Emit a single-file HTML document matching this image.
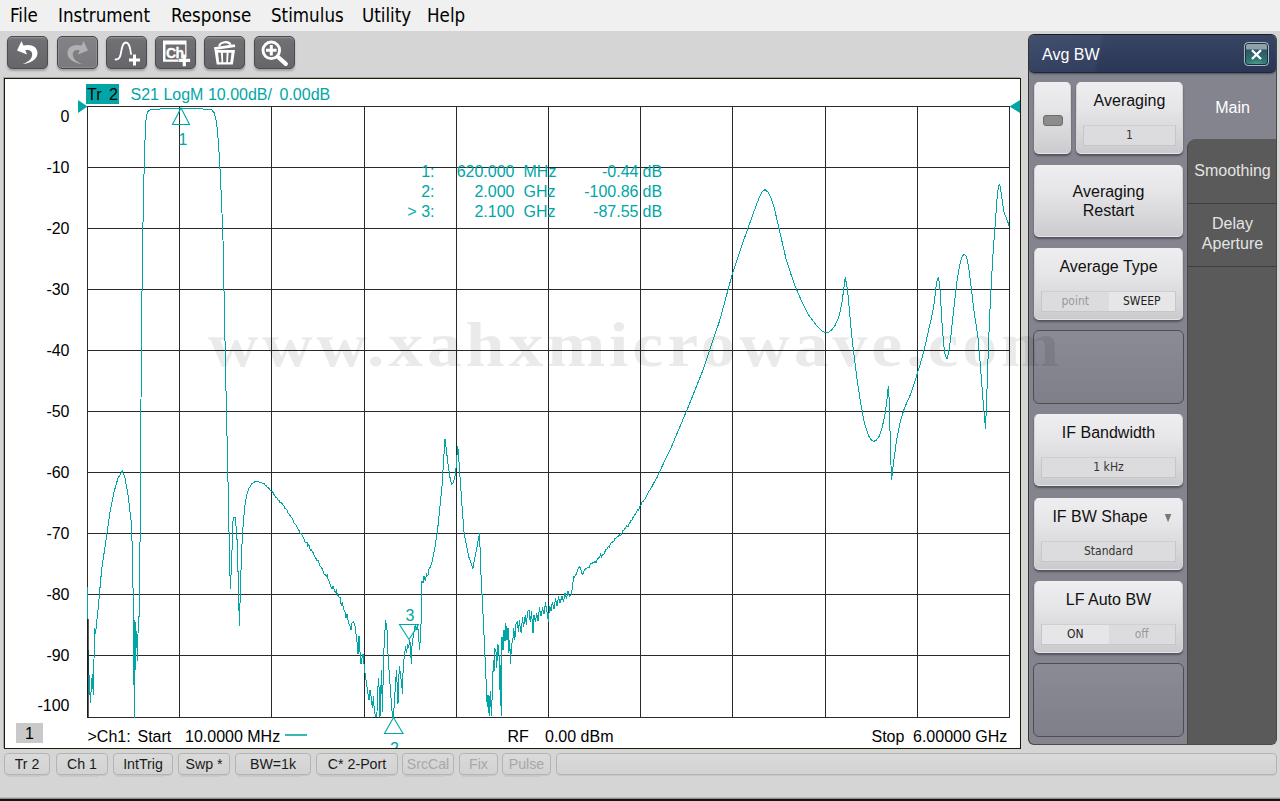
<!DOCTYPE html>
<html lang="en">
<head>
<meta charset="utf-8">
<title>Network Analyzer - Avg BW</title>
<style>
*{box-sizing:border-box;margin:0;padding:0}
html,body{width:1280px;height:801px;overflow:hidden}
body{position:relative;background:#d5d5d5;font-family:"Liberation Sans","DejaVu Sans",sans-serif;color:#000}
.abs{position:absolute}
/* menu */
#menu{position:absolute;left:0;top:0;width:1280px;height:31px;background:#f0f0f0}
#menu span{position:absolute;top:4px;font-family:"DejaVu Sans Condensed","Liberation Sans",sans-serif;font-size:18.6px;line-height:24px;white-space:nowrap}
/* toolbar */
.tb{position:absolute;top:36px;width:41px;height:33px;border-radius:5px;border:1px solid #4b4b4f;background:linear-gradient(#7b7b80 0%,#707074 12%,#6b6b6f 60%,#66666a 100%);box-shadow:0 2px 2px rgba(120,120,120,.55),inset 0 1px 0 rgba(255,255,255,.18)}
.tb svg{position:absolute;left:0;top:0;width:39px;height:31px}
.tb.dis{background:linear-gradient(#838387 0%,#7a7a7e 100%);border-color:#47474b;box-shadow:0 2px 2px rgba(120,120,120,.55),inset 0 0 0 1px rgba(255,255,255,.12)}
/* chart window */
#win{position:absolute;left:4px;top:78px;width:1017px;height:671px;background:#fff;border:1px solid #1c1c08;box-shadow:-1px -1px 0 rgba(0,0,0,.22)}
#chart{position:absolute;left:0;top:0;width:1280px;height:801px;pointer-events:none}
#chart text{font-family:"Liberation Sans",sans-serif;font-size:16px}
/* status bar */
.sb{position:absolute;top:753px;height:22px;border:1px solid #b4b4b4;border-radius:4px;background:linear-gradient(#dadada,#d2d2d2);font-size:14.2px;line-height:20px;text-align:center;white-space:nowrap;color:#1a1a1a;box-shadow:0 2px 0 -1px #c6c6c6}
.sb.off{color:#a8a8a8}
.sb.nl::after{display:none}
.sb::after{content:"";position:absolute;left:2px;right:9px;bottom:-3px;height:1px;background:#cacaca}
/* side panel */
#panel{position:absolute;left:1028px;top:34px;width:249px;height:711px;border-radius:6px;background:#83848e;border:1px solid #4a4a46;border-top-color:#1c1c1c;border-left-color:#34342e;overflow:hidden}
#phead{position:absolute;left:0;top:0;width:247px;height:38px;border-radius:5px 5px 5px 5px;background:linear-gradient(rgba(255,255,255,.05),rgba(0,0,0,.07)),linear-gradient(100deg,#384667 0%,#354364 28%,#2e3b5c 30%,#2d3a5b 100%);border-bottom:1px solid #1d2741;color:#fff;font-size:16px;line-height:40px;padding-left:13px;box-shadow:0 1px 2px rgba(0,0,0,.4)}
#pclose{position:absolute;left:215px;top:7px;width:25px;height:24px;border-radius:4px;border:1px solid #aab6c2;box-shadow:inset 0 0 0 1px #1b3040;background:radial-gradient(ellipse 9px 6px at 50% 100%,rgba(90,170,145,.75),rgba(90,170,145,0)),linear-gradient(#93a5af 0%,#8b9fa9 29%,#2c5566 30%,#2f6a70 65%,#3a8379 100%)}
#tabs{position:absolute;left:158px;top:104px;width:91px;height:608px;background:#5a5a5a;border-left:1px solid #47473f;border-top-left-radius:9px}
.tab{position:absolute;left:158px;width:91px;color:#e4e4e4;font-size:16px;line-height:20px;text-align:center}
.tabline{position:absolute;left:159px;width:90px;height:1px;background:#40403a}
.pb{position:absolute;left:5px;width:149px;height:72px;border-radius:5px;border:1px solid #d4d4d8;border-top-color:#f0f0f2;border-bottom-color:#e6e6e8;background:linear-gradient(#eeeef0 0%,#e6e6e8 35%,#d4d4d6 80%,#cbcbcd 100%);box-shadow:0 2px 2px rgba(50,50,60,.6);text-align:center;font-size:16px;line-height:19px;color:#111}
.pb .t{position:absolute;left:0;right:0;top:8px}
.pb .f{position:absolute;left:6px;right:6px;top:42px;height:21px;border:1px solid #c6c6c9;border-top-color:#cfcfd2;background:#dcdcde;font-size:12px;line-height:19px;color:#333;font-family:"DejaVu Sans Condensed","Liberation Sans",sans-serif}
.pb .f i{font-style:normal;position:absolute;top:0;height:19px;width:50%;text-align:center}
.pb .f i.l{left:0}.pb .f i.r{right:0}
.pb .f i.on{background:#e6e6e8;color:#222}
.pb .f i.dim{color:#9a9a9a}
.slot{position:absolute;left:4px;width:151px;height:74px;border-radius:6px;border:1px solid #4e4e52;background:linear-gradient(#8a8b95,#7e7f89)}
</style>
</head>
<body>
<div id="menu">
<span style="left:10px">File</span>
<span style="left:58px">Instrument</span>
<span style="left:171px">Response</span>
<span style="left:271px">Stimulus</span>
<span style="left:362px">Utility</span>
<span style="left:427px">Help</span>
</div>

<!-- toolbar buttons -->
<div class="tb" style="left:7px"><svg viewBox="0 0 39 31"><path d="M13.5 4 L9 13.5 L19 17.5 L17.3 13.2 C22 12 25 14.5 24 19 C23 23 19 25.5 14.5 27 C22 26.5 29.5 22.5 29.5 16 C29.5 9.5 23 6.5 15.4 8.5 Z" fill="#fff"/></svg></div>
<div class="tb dis" style="left:57px"><svg viewBox="0 0 39 31"><path d="M25.5 4 L30 13.5 L20 17.5 L21.7 13.2 C17 12 14 14.5 15 19 C16 23 20 25.5 24.5 27 C17 26.5 9.5 22.5 9.5 16 C9.5 9.5 16 6.5 23.6 8.5 Z" fill="#b0b0b2"/></svg></div>
<div class="tb" style="left:106px"><svg viewBox="0 0 39 31"><path d="M8.5 22.5 C13 22.5 13.5 19 14.5 13 C15.5 7 17 5.5 19 5.5 C21.5 5.5 23 8 24 17" fill="none" stroke="#fff" stroke-width="1.8" stroke-linecap="round"/><path d="M22 21.5h4v-4h3v4h4v3h-4v4h-3v-4h-4z" fill="#fff"/></svg></div>
<div class="tb" style="left:155px"><svg viewBox="0 0 39 31"><path d="M7 3.500h23.500v17h-1.300V7.500H9.500V22.500H22v2.200H7z" fill="#fff"/><text x="10" y="20.600" fill="#fff" stroke="#fff" stroke-width="0.350" style="font-family:'Liberation Sans',sans-serif;font-size:14px;font-weight:bold;letter-spacing:-0.6px">Ch</text><path d="M22.500 21.800h4.200v-4.200h3.200v4.200h4.200v3.200h-4.200v4.200h-3.200v-4.200h-4.200z" fill="#fff"/></svg></div>
<div class="tb" style="left:204px"><svg viewBox="0 0 39 31"><path d="M9.500 13h20.500l-2.200 14.500H11.700z M13 15.800l1.200 9.500h2.300l-.6-9.500z M17.900 15.800l.3 9.500h3.100l.3-9.500z M23.600 15.800l-.6 9.500h2.300l1.200-9.500z" fill="#fff" fill-rule="evenodd"/><path d="M9 10.300 L29.800 7.200 L30.300 10 L9.500 13.100 Z" fill="#fff"/><path d="M14.200 9.500 C14.800 4.800 23.500 3.500 25.500 7.800" fill="none" stroke="#fff" stroke-width="2.200"/></svg></div>
<div class="tb" style="left:254px"><svg viewBox="0 0 39 31"><circle cx="16.300" cy="13.300" r="8.300" fill="none" stroke="#fff" stroke-width="2.900"/><path d="M23 20 L30.800 26.800" stroke="#fff" stroke-width="4.200" stroke-linecap="round"/><path d="M11 11.800h3.800V8h3v3.800h3.800v3h-3.800v3.800h-3v-3.800H11z" fill="#fff"/></svg></div>

<div id="win"></div>

<svg id="chart" viewBox="0 0 1280 801">
<defs><clipPath id="cb"><rect x="0" y="700" width="1020" height="48"/></clipPath></defs>
<g stroke="#2a2a2a" stroke-width="1" shape-rendering="crispEdges"><line x1="87.5" y1="106" x2="87.5" y2="717.5"/><line x1="179.5" y1="106" x2="179.5" y2="717.5"/><line x1="271.5" y1="106" x2="271.5" y2="717.5"/><line x1="364.5" y1="106" x2="364.5" y2="717.5"/><line x1="456.5" y1="106" x2="456.5" y2="717.5"/><line x1="548.5" y1="106" x2="548.5" y2="717.5"/><line x1="640.5" y1="106" x2="640.5" y2="717.5"/><line x1="732.5" y1="106" x2="732.5" y2="717.5"/><line x1="825.5" y1="106" x2="825.5" y2="717.5"/><line x1="917.5" y1="106" x2="917.5" y2="717.5"/><line x1="1009.5" y1="106" x2="1009.5" y2="717.5"/><line x1="87" y1="106.5" x2="1010" y2="106.5"/><line x1="87" y1="167.5" x2="1010" y2="167.5"/><line x1="87" y1="228.5" x2="1010" y2="228.5"/><line x1="87" y1="289.5" x2="1010" y2="289.5"/><line x1="87" y1="350.5" x2="1010" y2="350.5"/><line x1="87" y1="411.5" x2="1010" y2="411.5"/><line x1="87" y1="472.5" x2="1010" y2="472.5"/><line x1="87" y1="533.5" x2="1010" y2="533.5"/><line x1="87" y1="594.5" x2="1010" y2="594.5"/><line x1="87" y1="655.5" x2="1010" y2="655.5"/><line x1="87" y1="717.5" x2="1010" y2="717.5"/></g>
<g fill="#000"><text x="69.5" y="122" text-anchor="end">0</text><text x="69.5" y="173" text-anchor="end">-10</text><text x="69.5" y="234" text-anchor="end">-20</text><text x="69.5" y="295" text-anchor="end">-30</text><text x="69.5" y="356" text-anchor="end">-40</text><text x="69.5" y="417" text-anchor="end">-50</text><text x="69.5" y="478" text-anchor="end">-60</text><text x="69.5" y="539" text-anchor="end">-70</text><text x="69.5" y="600" text-anchor="end">-80</text><text x="69.5" y="661" text-anchor="end">-90</text><text x="69.5" y="711" text-anchor="end">-100</text></g>
<!-- trace label -->
<rect x="86" y="84" width="33" height="20" fill="#00a6a6"/>
<text x="87" y="100" fill="#000">Tr</text><text x="109" y="100" fill="#000">2</text>
<text x="130.500" y="100" fill="#00a6a6">S21 LogM 10.00dB/</text><text x="279.500" y="100" fill="#00a6a6">0.00dB</text>
<path d="M78 100 L87.500 106.500 L78 113 Z" fill="#00a6a6"/>
<path d="M1020 100 L1009.500 106.500 L1020 113 Z" fill="#00a6a6"/>
<!-- trace -->
<polyline fill="none" stroke="#00a6a6" stroke-width="1" stroke-linejoin="round" shape-rendering="crispEdges" points="87.5,587.0 87.7,640.0 88.5,665.0 90.4,703.0 91.6,682.0 92.4,674.0 92.8,686.0 93.4,695.0 94.0,660.0 94.4,628.0 95.6,634.0 96.4,624.0 98.0,610.0 99.6,592.0 101.6,570.0 106.0,540.0 110.0,512.0 114.0,492.0 118.0,478.0 122.4,471.0 125.0,478.0 128.0,495.0 131.5,524.0 132.6,560.0 133.2,600.0 133.6,650.0 134.4,717.5 135.0,620.0 135.5,669.0 136.4,631.0 137.5,661.0 138.3,618.0 139.2,616.0 139.6,590.0 140.1,532.0 141.0,400.0 141.9,300.0 142.7,240.0 143.6,190.0 144.7,148.0 145.5,128.0 146.3,116.0 148.0,111.5 149.9,110.0 160.0,109.0 180.0,108.0 200.0,108.6 211.8,110.0 214.0,112.5 215.8,118.0 217.0,127.0 218.2,140.0 219.4,158.0 220.6,180.0 221.8,208.0 223.0,240.0 223.8,280.0 224.6,320.0 225.4,360.0 226.2,400.0 227.4,453.0 228.3,495.0 229.1,536.0 230.3,589.0 231.0,575.0 231.6,565.0 232.4,535.0 233.2,517.0 235.3,517.0 236.9,536.0 238.2,577.0 239.4,626.0 240.6,581.0 242.3,536.0 244.7,507.0 246.5,496.0 248.9,488.5 252.0,483.5 256.3,481.0 257.3,481.2 258.3,481.5 259.3,482.3 260.3,482.2 261.3,482.9 262.3,483.1 263.3,483.6 264.2,483.8 265.1,485.3 266.0,485.5 266.9,487.0 267.9,487.2 268.8,488.4 269.7,489.5 270.6,490.9 271.5,491.4 272.5,491.6 273.4,493.3 274.4,495.2 275.3,496.8 276.3,497.5 277.3,498.3 278.2,500.8 279.2,500.1 280.1,502.9 281.1,502.8 282.1,503.4 283.0,504.9 284.0,506.2 284.9,508.3 285.9,509.0 286.8,509.5 287.7,512.2 288.6,513.9 289.6,514.7 290.5,516.7 291.4,517.1 292.3,518.1 293.2,520.4 294.1,523.1 295.1,523.9 296.0,524.9 296.9,527.2 297.8,528.4 298.7,529.6 299.6,532.4 300.6,533.4 301.5,533.7 302.4,536.0 303.3,537.8 304.2,539.0 305.1,542.3 306.1,542.6 307.0,542.4 307.9,546.3 308.8,544.6 309.7,547.6 310.6,550.6 311.6,549.8 312.5,552.3 313.4,552.4 314.3,556.1 315.2,557.6 316.1,558.6 317.1,560.9 318.0,560.3 318.9,562.7 319.8,565.9 320.8,566.5 321.7,568.3 322.6,569.1 323.6,573.7 324.5,574.9 325.5,574.1 326.4,576.8 327.3,574.2 328.3,580.3 329.2,581.0 330.1,584.0 331.0,587.2 331.9,588.9 332.8,586.2 333.7,588.0 334.6,591.7 335.5,592.3 336.4,589.7 337.4,596.0 338.3,595.0 339.3,597.9 340.2,597.9 341.2,605.7 342.1,602.5 343.1,606.5 344.0,610.0 345.0,611.6 346.0,617.6 347.0,614.0 348.0,620.4 349.0,623.8 350.0,626.0 351.0,630.0 352.0,623.0 353.6,622.0 355.0,626.0 357.0,642.0 358.0,654.0 359.0,636.0 360.0,652.0 361.0,664.0 362.0,658.0 363.0,654.0 364.4,668.0 366.0,680.0 368.0,694.0 369.0,700.0 370.0,690.0 371.0,696.0 372.4,708.0 373.4,696.0 374.4,712.0 376.0,717.0 377.0,712.0 377.6,694.0 378.4,678.0 379.2,690.0 380.0,717.0 380.6,700.0 381.4,670.0 382.0,694.0 382.6,712.0 383.4,660.0 384.4,640.0 385.6,620.0 387.0,630.0 388.0,654.0 389.0,670.0 390.0,684.0 391.4,704.0 392.6,717.5 393.6,717.0 394.4,700.0 395.6,684.0 396.4,670.0 397.2,686.0 398.0,704.0 398.6,680.0 399.6,666.0 400.4,676.0 401.6,682.0 402.4,694.0 403.2,666.0 404.4,656.0 405.6,646.0 406.6,653.0 407.6,644.0 408.6,648.0 409.6,640.0 410.6,646.0 411.2,664.0 412.0,646.0 413.0,638.0 414.0,632.0 415.2,625.0 416.4,630.0 417.6,625.0 418.6,636.0 419.6,650.0 420.4,636.0 421.2,620.0 421.4,600.0 421.8,581.0 423.0,583.0 424.0,576.0 425.2,581.0 426.5,574.0 427.8,576.0 429.0,569.0 430.5,567.0 432.3,561.3 434.8,548.0 437.3,532.3 439.6,510.0 442.0,485.8 443.5,462.0 445.0,438.6 446.4,450.0 447.8,462.6 449.7,476.0 451.6,485.0 453.5,482.0 455.5,474.2 456.6,460.0 457.8,446.3 459.0,462.0 460.1,478.0 462.0,506.0 464.0,532.3 466.5,546.0 469.0,557.4 471.0,563.0 472.9,568.3 474.8,558.0 476.8,547.8 478.2,540.0 479.5,533.4 480.2,552.0 481.0,574.9 482.2,598.0 483.4,621.3 484.5,646.0 485.7,671.6 486.5,690.0 487.2,706.5 488.0,695.0 489.2,716.0 489.8,700.0 490.3,691.0 490.9,705.0 491.5,716.0 492.4,688.0 493.4,660.0 494.0,672.0 494.8,648.0 496.1,652.3 496.8,668.0 497.6,644.0 498.9,648.4 499.6,690.0 500.3,665.0 501.2,716.0 501.6,670.0 502.0,636.8 503.0,650.0 504.0,630.0 505.0,641.0 505.8,623.2 507.0,640.0 508.0,628.0 508.9,652.3 509.7,640.0 510.5,663.9 511.5,645.0 512.8,640.7 513.8,628.0 514.8,640.0 516.0,624.0 517.4,621.3 518.4,632.0 519.4,620.0 520.4,630.0 521.3,633.0 522.4,617.0 523.6,627.0 525.2,615.5 526.4,625.0 527.6,612.0 529.0,609.7 530.2,622.0 531.5,612.0 533.0,633.0 534.0,615.0 535.4,622.0 536.8,613.6 538.0,621.0 539.5,608.0 541.0,616.0 542.6,607.8 544.0,614.0 545.5,603.0 547.0,612.0 548.4,621.3 549.6,606.0 551.0,611.0 552.3,602.0 554.0,609.0 555.5,599.0 557.0,606.0 558.5,597.0 560.0,603.0 562.0,596.2 563.5,602.0 565.0,593.0 566.5,599.0 568.0,591.0 569.5,597.0 571.6,594.2 572.6,585.0 573.6,576.8 574.6,577.6 575.5,574.8 576.5,574.2 577.5,569.4 578.4,568.1 579.4,567.0 580.4,567.6 581.3,571.5 582.3,574.4 583.3,573.0 584.3,569.6 585.2,569.6 586.2,568.2 587.2,567.9 588.1,568.0 589.1,567.5 590.1,564.5 591.0,563.0 592.0,563.7 593.0,562.7 593.9,562.7 594.9,561.3 595.9,563.2 596.8,560.1 597.8,558.5 598.8,557.9 599.7,557.6 600.7,553.7 601.7,557.1 602.6,554.7 603.6,555.0 604.6,552.8 605.5,550.0 606.5,549.7 607.4,548.2 608.3,546.5 609.2,547.5 610.1,544.5 611.0,542.7 611.9,543.0 612.8,541.3 613.7,541.6 614.6,538.8 615.5,538.6 616.4,537.4 617.3,537.0 618.2,536.6 619.1,534.8 620.0,535.4 620.9,535.7 621.8,533.3 622.8,530.5 623.7,530.1 624.6,528.9 625.5,528.0 626.5,525.7 627.4,526.8 628.3,526.6 629.2,523.5 630.2,522.3 631.1,520.2 632.0,520.0 632.9,517.4 633.8,516.7 634.8,514.8 635.7,514.4 636.6,511.4 637.5,510.0 638.5,510.4 639.4,507.7 640.3,505.2 641.2,504.7 642.2,501.9 643.1,501.6 644.0,500.0 644.9,499.0 645.8,497.2 646.7,495.5 647.7,493.5 648.6,492.0 649.5,490.3 650.4,489.4 651.3,487.5 652.2,486.2 653.2,484.2 654.1,482.4 655.0,481.4 655.9,479.6 656.8,477.9 657.8,475.8 658.7,473.8 659.7,471.8 660.6,469.8 661.5,467.5 662.5,465.7 663.4,463.6 664.4,461.4 665.3,459.5 666.3,457.5 667.2,455.6 668.1,453.8 669.1,451.9 670.0,449.7 671.0,447.9 671.9,445.7 687.9,407.7 703.9,367.7 719.9,319.8 731.8,275.9 743.8,239.9 753.8,211.9 759.0,198.0 761.8,192.0 765.0,189.6 768.6,192.8 771.0,198.0 773.8,206.0 779.8,231.9 785.8,257.9 790.5,273.0 795.8,287.8 801.5,301.0 807.8,313.8 813.0,321.0 817.7,327.0 822.0,331.0 825.7,332.6 829.0,332.0 831.7,329.8 835.0,325.5 837.7,319.8 840.0,312.5 841.7,303.8 843.5,291.0 845.2,277.4 846.5,284.0 847.7,291.8 849.6,312.0 851.7,335.8 854.7,361.0 857.7,383.7 860.7,403.0 863.7,419.7 866.2,429.0 868.5,435.7 871.0,439.6 873.7,441.5 876.5,440.0 879.4,435.8 882.0,428.0 884.5,417.0 886.4,405.0 887.6,393.0 888.4,386.0 889.2,400.0 889.8,420.0 890.5,455.0 891.7,479.4 893.0,467.0 894.3,457.1 896.3,442.0 898.6,429.5 901.0,419.0 903.7,410.4 907.0,402.0 910.0,395.6 913.3,386.5 916.4,376.5 919.6,366.0 922.8,355.3 926.0,342.0 929.1,327.7 931.4,318.0 933.4,308.6 935.0,296.0 936.4,284.0 937.5,279.0 938.5,277.6 939.4,283.0 940.2,291.6 941.0,306.0 941.9,321.3 943.1,337.0 944.4,351.0 945.7,356.5 947.0,358.6 948.3,354.5 949.5,346.8 951.2,333.0 952.9,317.0 954.8,300.0 956.7,283.1 958.8,270.0 961.0,259.7 962.7,255.5 964.4,254.2 965.9,255.7 967.3,259.7 969.0,270.0 970.7,283.1 972.2,296.0 973.7,308.6 975.8,323.0 978.0,338.3 979.5,355.0 980.9,372.2 982.2,389.0 983.5,406.2 984.6,418.0 985.6,428.7 986.4,405.0 987.3,380.7 988.3,351.0 989.4,321.3 991.0,289.0 992.8,257.6 994.0,240.0 995.3,223.7 996.4,207.0 997.5,193.0 998.5,186.5 999.6,184.6 1000.5,187.5 1001.3,194.0 1002.5,203.0 1003.8,211.0 1005.3,215.5 1006.8,219.4 1008.0,222.5 1009.0,225.8"/>
<rect x="87" y="619" width="1.700" height="98" fill="#1a1a1a"/>
<!-- markers -->
<g fill="none" stroke="#00a6a6" stroke-width="1.1">
<path d="M181 108 L172.500 124.500 L189.500 124.500 Z"/>
<path d="M393.500 717.500 L384.500 733.500 L403 733.500 Z"/>
<path d="M399.500 624.500 L418.500 624.500 L409 639.500 Z"/>
</g>
<g fill="#00a6a6">
<text x="178.500" y="145">1</text>
<text x="405.500" y="620.500">3</text>
<text x="390" y="753.500" clip-path="url(#cb)">2</text>
<text x="434.500" y="177" text-anchor="end">1:</text><text x="514.500" y="177" text-anchor="end">620.000</text><text x="523.500" y="177">MHz</text><text x="638.500" y="177" text-anchor="end">-0.44</text><text x="642.500" y="177">dB</text>
<text x="434.500" y="197" text-anchor="end">2:</text><text x="514.500" y="197" text-anchor="end">2.000</text><text x="523.500" y="197">GHz</text><text x="638.500" y="197" text-anchor="end">-100.86</text><text x="642.500" y="197">dB</text>
<text x="434.500" y="217" text-anchor="end">&gt; 3:</text><text x="514.500" y="217" text-anchor="end">2.100</text><text x="523.500" y="217">GHz</text><text x="638.500" y="217" text-anchor="end">-87.55</text><text x="642.500" y="217">dB</text>
</g>
<!-- bottom row -->
<rect x="16" y="723" width="27" height="20" fill="#c9c9c9"/>
<text x="29.500" y="739" text-anchor="middle" fill="#000">1</text>
<text x="87.500" y="742" fill="#000">&gt;Ch1:</text><text x="137.500" y="742" fill="#000">Start</text><text x="185" y="742" fill="#000">10.0000 MHz</text>
<line x1="285" y1="735" x2="307" y2="735" stroke="#00a6a6" stroke-width="1.600"/>
<text x="507.500" y="742" fill="#000">RF</text><text x="545" y="742" fill="#000">0.00 dBm</text>
<text x="871.500" y="742" fill="#000">Stop</text><text x="913" y="742" fill="#000">6.00000 GHz</text>
</svg>
<div class="abs" style="left:0;top:749px;width:1024px;height:4px;background:#d5d5d5"></div>

<!-- status bar -->
<div class="sb" style="left:4px;width:46px">Tr 2</div>
<div class="sb" style="left:56px;width:52px">Ch 1</div>
<div class="sb" style="left:113px;width:60px">IntTrig</div>
<div class="sb" style="left:178px;width:52px">Swp *</div>
<div class="sb" style="left:235px;width:76px">BW=1k</div>
<div class="sb" style="left:316px;width:82px">C* 2-Port</div>
<div class="sb off" style="left:402px;width:52px">SrcCal</div>
<div class="sb off" style="left:459px;width:39px">Fix</div>
<div class="sb off" style="left:502px;width:49px">Pulse</div>
<div class="sb nl" style="left:556px;width:721px"></div>
<div class="abs" style="left:0;top:797px;width:1280px;height:1px;background:#bcbcbc"></div>
<div class="abs" style="left:0;top:798px;width:1280px;height:1px;background:#8c8c8c"></div>
<div class="abs" style="left:0;top:799px;width:1280px;height:2px;background:#141414"></div>

<!-- side panel -->
<div id="panel">
 <div id="tabs"></div>
 <div class="tabline" style="top:168px"></div>
 <div class="tabline" style="top:231px"></div>
 <div class="tab" style="top:63px;color:#fff">Main</div>
 <div class="tab" style="top:126px">Smoothing</div>
 <div class="tab" style="top:179px">Delay<br>Aperture</div>

 <div class="pb" style="top:47px;width:37px"><div class="abs" style="left:8px;top:32px;width:20px;height:11px;border-radius:3px;background:#8c8c8c;border:1px solid #6c6c6c"></div></div>
 <div class="pb" style="top:47px;left:47px;width:107px"><div class="t">Averaging</div><div class="f">1</div></div>
 <div class="pb" style="top:130px"><div class="t" style="top:16px">Averaging<br>Restart</div></div>
 <div class="pb" style="top:213px"><div class="t">Average Type</div><div class="f"><i class="l dim">point</i><i class="r on">SWEEP</i></div></div>
 <div class="slot" style="top:295px"></div>
 <div class="pb" style="top:379px"><div class="t">IF Bandwidth</div><div class="f">1 kHz</div></div>
 <div class="pb" style="top:463px"><div class="t" style="right:17px">IF BW Shape</div><div class="abs" style="right:7px;top:11px;font-size:14px;color:#777;line-height:14px;transform:scaleX(.8)">&#9660;</div><div class="f">Standard</div></div>
 <div class="pb" style="top:546px"><div class="t">LF Auto BW</div><div class="f"><i class="l on">ON</i><i class="r dim">off</i></div></div>
 <div class="slot" style="top:628px"></div>
 <div id="phead">Avg BW<div id="pclose"><svg style="position:absolute;left:0;top:0" width="23" height="22" viewBox="0 0 23 22"><path d="M7.800 8 L15.200 15.200 M15.200 8 L7.800 15.200" stroke="#fff" stroke-width="2.300" stroke-linecap="square"/></svg></div></div>
</div>
<svg class="abs" style="left:0;top:0;width:1280px;height:801px;pointer-events:none" viewBox="0 0 1280 801">
<defs><filter id="wb" x="-5%" y="-20%" width="110%" height="140%"><feGaussianBlur stdDeviation="0.7"/></filter></defs>
<g filter="url(#wb)" opacity="0.08"><text x="208" y="366" font-weight="bold" fill="#000" textLength="855" lengthAdjust="spacingAndGlyphs" style="font-family:'Liberation Serif','DejaVu Serif',serif;font-size:63px;letter-spacing:3.5px">www.xahxmicrowave.com</text></g>
</svg>
</body>
</html>
